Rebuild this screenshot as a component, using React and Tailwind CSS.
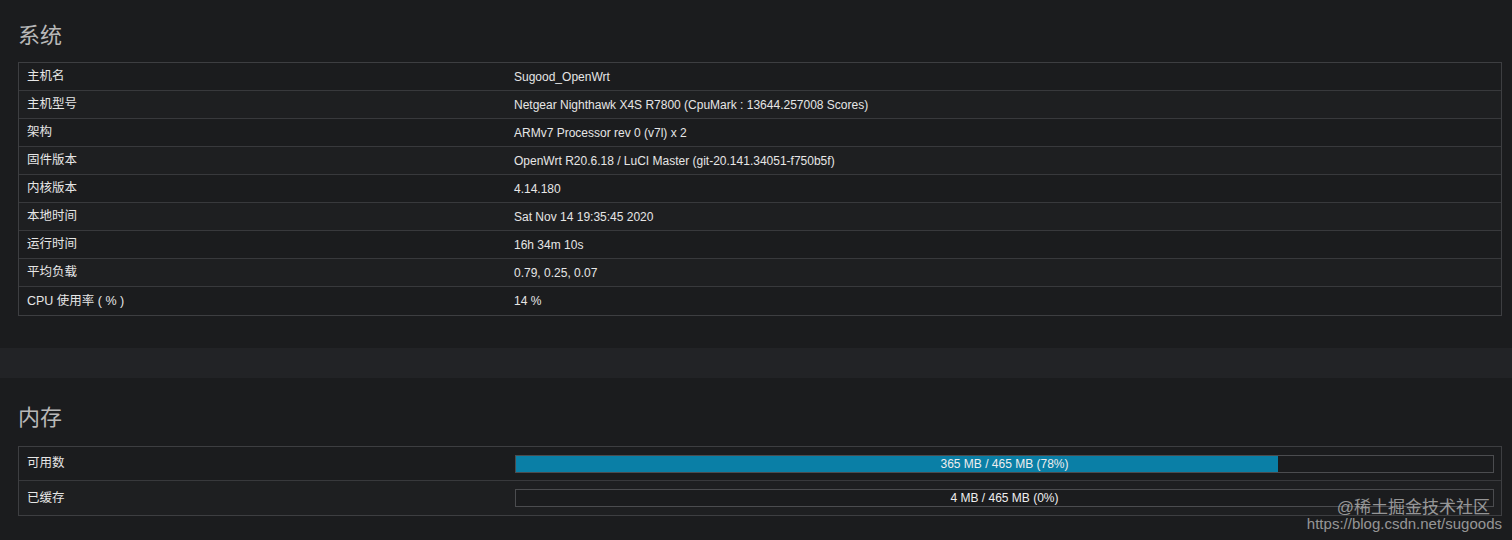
import React from 'react';

const FONT = { fontFamily: '"Liberation Sans", "Noto Sans CJK SC", sans-serif' };

const systemRows = [
  ['主机名', 'Sugood_OpenWrt'],
  ['主机型号', 'Netgear Nighthawk X4S R7800 (CpuMark : 13644.257008 Scores)'],
  ['架构', 'ARMv7 Processor rev 0 (v7l) x 2'],
  ['固件版本', 'OpenWrt R20.6.18 / LuCI Master (git-20.141.34051-f750b5f)'],
  ['内核版本', '4.14.180'],
  ['本地时间', 'Sat Nov 14 19:35:45 2020'],
  ['运行时间', '16h 34m 10s'],
  ['平均负载', '0.79, 0.25, 0.07'],
  ['CPU 使用率 ( % )', '14 %'],
];

const memRows = [
  { label: '可用数', pct: 78, text: '365 MB / 465 MB (78%)' },
  { label: '已缓存', pct: 0, text: '4 MB / 465 MB (0%)' },
];

function Bar({ pct, text }) {
  return (
    <div className="relative h-[18px] w-full border border-[#4b4c4f] bg-[#1b1c1e]">
      <div className="h-full bg-[#0a7fa6]" style={{ width: pct + '%' }} />
      <div className="absolute inset-0 flex items-center justify-center text-[12px] text-[#eeeeee]">
        {text}
      </div>
    </div>
  );
}

export default function App() {
  return (
    <div className="relative h-[540px] w-[1512px] overflow-hidden bg-[#1b1c1e]" style={FONT}>
      {/* 系统 */}
      <section className="h-[348px] pt-[22px]">
        <h2 className="ml-[18px] text-[22px] leading-[28px] text-[#b8b8b8]">系统</h2>
        <div className="ml-[18px] mr-[10px] mt-[12px] border border-[#3d3e41]">
          {systemRows.map(([k, v], i) => (
            <div
              key={k}
              className={
                'flex h-[28px] items-center text-[#e6e6e6] ' +
                (i < systemRows.length - 1 ? 'border-b border-[#38393c] ' : '') +
                (i % 2 === 1 ? 'bg-[#1e1f21]' : 'bg-[#1b1c1e]')
              }
            >
              <div className="w-[487px] pl-[8px] text-[12.5px]">{k}</div>
              <div className="flex-1 pl-[8px] text-[12px]">{v}</div>
            </div>
          ))}
        </div>
      </section>

      <div className="h-[30px] bg-[#222326]" />

      {/* 内存 */}
      <section className="pt-[26px]">
        <h2 className="ml-[18px] text-[22px] leading-[28px] text-[#b8b8b8]">内存</h2>
        <div className="ml-[18px] mr-[10px] mt-[14px] border border-[#3d3e41]">
          {memRows.map((r, i) => (
            <div
              key={r.label}
              className={
                'flex h-[34px] items-center text-[12.5px] text-[#e6e6e6] ' +
                (i === 0 ? 'border-b border-[#38393c] bg-[#1b1c1e]' : 'bg-[#1e1f21]')
              }
            >
              <div className="w-[488px] pl-[8px]">{r.label}</div>
              <div className="flex-1 pl-[8px] pr-[7px]">
                <Bar pct={r.pct} text={r.text} />
              </div>
            </div>
          ))}
        </div>
      </section>

      {/* watermark */}
      <div className="pointer-events-none absolute bottom-[9px] right-[10px] flex flex-col items-end text-[#c9c9c9] opacity-70">
        <div className="mr-[12px] text-[17px] leading-[16px]">@稀土掘金技术社区</div>
        <div className="text-[15px] leading-[15px]">https://blog.csdn.net/sugoods</div>
      </div>
    </div>
  );
}
